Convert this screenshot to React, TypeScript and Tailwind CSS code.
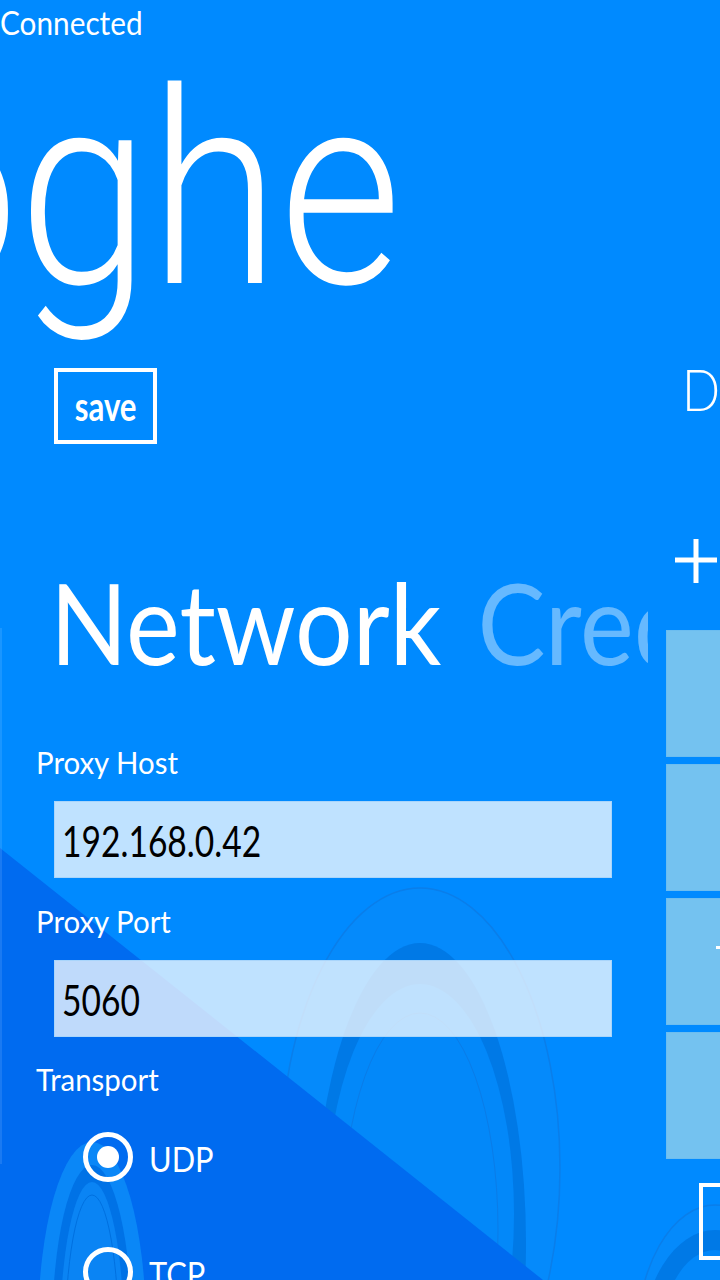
import React from "react";

function Background() {
  return (
    <svg
      className="absolute inset-0"
      width="720"
      height="1280"
      viewBox="0 0 720 1280"
    >
      {/* big motif */}
      <ellipse cx="420" cy="1168" rx="140" ry="280" fill="#058AFB" stroke="#0A7EEA" strokeWidth="1.5" />
      <ellipse cx="420" cy="1243" rx="106" ry="300" fill="#0079E6" />
      <ellipse cx="420" cy="1214" rx="94" ry="230" fill="#0388F9" />
      <ellipse cx="420" cy="1230" rx="78" ry="217" fill="none" stroke="#0A7CE8" strokeWidth="1" />
      {/* bottom right motif */}
      <ellipse cx="715" cy="1345" rx="79" ry="140" fill="#058AFB" stroke="#0A7EEA" strokeWidth="1.5" />
      <ellipse cx="715" cy="1350" rx="74" ry="120" fill="#0079E6" />
      <ellipse cx="715" cy="1350" rx="56" ry="100" fill="#0388F9" />
      {/* dark triangle */}
      <polygon points="0,848 543,1280 0,1280" fill="#006BF0" />
      {/* small motif */}
      <ellipse cx="92" cy="1330" rx="54" ry="188" fill="#0A87F7" />
      <ellipse cx="92" cy="1335" rx="40" ry="170" fill="#0072E6" />
      <ellipse cx="92" cy="1340" rx="32" ry="158" fill="#0A84F4" />
      <ellipse cx="92" cy="1345" rx="27" ry="150" fill="none" stroke="#0070E0" strokeWidth="1" />
    </svg>
  );
}

function Label({ text, mt }: { text: string; mt: string }) {
  return (
    <div className={`ml-[36px] text-[30px] leading-[36px] whitespace-nowrap ${mt}`}>
      <span className="inline-block origin-left scale-x-[0.98]">{text}</span>
    </div>
  );
}

function TextBox({ value }: { value: string }) {
  return (
    <div className="mt-[21px] ml-[54px] w-[558px] h-[77px] bg-white/75 border border-[#A9D5FB] text-black text-[42px] leading-[50px] pt-[14px] pl-[7px] whitespace-nowrap">
      <span className="inline-block origin-left scale-x-[0.8]">{value}</span>
    </div>
  );
}

function Radio({ label, checked, mt }: { label: string; checked: boolean; mt: string }) {
  return (
    <div className={`flex items-center ml-[83px] h-[50px] ${mt}`}>
      <div className="w-[50px] h-[50px] rounded-full border-[5px] border-white flex items-center justify-center shrink-0">
        {checked && <div className="w-[22px] h-[22px] rounded-full bg-white" />}
      </div>
      <div className="ml-[16px] text-[35px] leading-[50px] pt-[2px]">
        <span className="inline-block origin-left scale-x-[0.88]">{label}</span>
      </div>
    </div>
  );
}

function LeftSection() {
  return (
    <div className="w-[648px] shrink-0 overflow-hidden flex flex-col">
      <div className="ml-[54px] w-[103px] h-[76px] border-[4px] border-white flex items-center justify-center">
        <span className="inline-block text-[40px] leading-[40px] font-bold scale-x-[0.78]">save</span>
      </div>
      <div className="mt-[109px] ml-[50px] text-[113px] leading-[136px] whitespace-nowrap">
        <span className="inline-block origin-left scale-x-[0.9]">
          Network<span className="ml-[40px] text-white/40">Credentials</span>
        </span>
      </div>
      <Label text="Proxy Host" mt="mt-[55px]" />
      <TextBox value="192.168.0.42" />
      <Label text="Proxy Port" mt="mt-[25px]" />
      <TextBox value="5060" />
      <Label text="Transport" mt="mt-[24px]" />
      <Radio label="UDP" checked mt="mt-[35px]" />
      <Radio label="TCP" checked={false} mt="mt-[65px]" />
    </div>
  );
}

function RightSection() {
  return (
    <div className="ml-[18px] w-[300px] shrink-0 flex flex-col">
      <div className="mt-[-13px] ml-[16px] text-[57px] leading-[68px] font-light whitespace-nowrap">
        <span className="inline-block origin-left scale-x-[0.88]">Dialer</span>
      </div>
      <div className="mt-[116px] ml-[9px] w-[44px] h-[44px]">
        <svg width="44" height="44" viewBox="0 0 44 44">
          <path d="M21 0V44M0 21H42" stroke="white" strokeWidth="5" fill="none" />
        </svg>
      </div>
      <div className="mt-[47px] flex flex-col gap-[7px]">
        <div className="h-[127px] bg-[#74C2F0] border border-[#6CBDF0]" />
        <div className="h-[127px] bg-[#74C2F0] border border-[#6CBDF0]" />
        <div className="relative h-[127px] bg-[#74C2F0] border border-[#6CBDF0]">
          <div className="absolute left-[49px] top-[47px] w-[8px] h-[3px] bg-white" />
        </div>
        <div className="h-[127px] bg-[#74C2F0] border border-[#6CBDF0]" />
      </div>
      <div className="mt-[24px] ml-[33px] w-[103px] h-[77px] border-[4px] border-white" />
    </div>
  );
}

export default function App() {
  return (
    <div className="relative w-[720px] h-[1280px] overflow-hidden bg-[#008AFF] text-white font-['Lato',sans-serif]">
      <Background />
      <div className="absolute left-0 top-[628px] w-[2px] h-[536px] bg-white/10" />
      <div className="relative flex flex-col">
        <div className="h-[43px] pt-[3px] text-[32px] leading-[40px] whitespace-nowrap">
          <span className="inline-block origin-left scale-x-[0.93]">Connected</span>
        </div>
        <div className="mt-[13px] h-[270px] ml-[-114px] text-[270px] leading-[270px] font-light font-['Roboto',sans-serif] whitespace-nowrap">
          <span className="inline-block origin-left scale-x-[0.875]">oghe</span>
        </div>
        <div className="mt-[42px] flex">
          <LeftSection />
          <RightSection />
        </div>
      </div>
    </div>
  );
}
